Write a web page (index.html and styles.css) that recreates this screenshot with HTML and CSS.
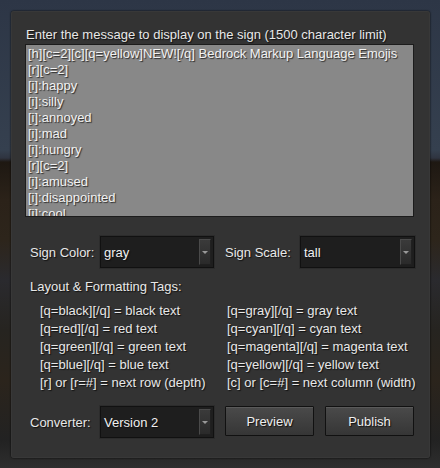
FILE: index.html
```html
<!DOCTYPE html>
<html>
<head>
<meta charset="utf-8">
<link rel="stylesheet" href="styles.css">
</head>
<body>
<div class="scene">
  <div class="panel">
    <div class="title">Enter the message to display on the sign (1500 character limit)</div>
    <div class="editor">
      <div>[h][c=2][c][q=yellow]NEW![/q] Bedrock Markup Language Emojis</div>
      <div>[r][c=2]</div>
      <div>[i]:happy</div>
      <div>[i]:silly</div>
      <div>[i]:annoyed</div>
      <div>[i]:mad</div>
      <div>[i]:hungry</div>
      <div>[r][c=2]</div>
      <div>[i]:amused</div>
      <div>[i]:disappointed</div>
      <div>[i]:cool</div>
    </div>
    <div class="row settings">
      <div class="field">
        <span class="label label-a">Sign Color:</span>
        <div class="select sel-a"><span class="value">gray</span><span class="arrow"></span></div>
      </div>
      <div class="field">
        <span class="label label-b">Sign Scale:</span>
        <div class="select sel-b"><span class="value">tall</span><span class="arrow"></span></div>
      </div>
    </div>
    <div class="subtitle">Layout &amp; Formatting Tags:</div>
    <div class="tags">
      <div>[q=black][/q] = black text</div>
      <div>[q=gray][/q] = gray text</div>
      <div>[q=red][/q] = red text</div>
      <div>[q=cyan][/q] = cyan text</div>
      <div>[q=green][/q] = green text</div>
      <div>[q=magenta][/q] = magenta text</div>
      <div>[q=blue][/q] = blue text</div>
      <div>[q=yellow][/q] = yellow text</div>
      <div>[r] or [r=#] = next row (depth)</div>
      <div>[c] or [c=#] = next column (width)</div>
    </div>
    <div class="row converter">
      <div class="field">
        <span class="label label-a">Converter:</span>
        <div class="select sel-a"><span class="value">Version 2</span><span class="arrow"></span></div>
      </div>
      <div class="buttons">
        <button class="btn">Preview</button>
        <button class="btn">Publish</button>
      </div>
    </div>
  </div>
</div>
</body>
</html>
```
FILE: styles.css
```css
html, body {
  margin: 0;
  padding: 0;
}
body {
  width: 440px;
  height: 468px;
  overflow: hidden;
  font-family: "Liberation Sans", Arial, sans-serif;
  font-size: 13px;
  color: #e8e8e8;
}
.scene {
  width: 440px;
  height: 468px;
  box-sizing: border-box;
  padding: 11px 10px 10px 11px;
  background:
    linear-gradient(to bottom,
      #2d3646 0px, #35404f 150px, #2f3440 158px,
      #1e1812 162px, #2b2219 200px, #2d251b 240px,
      #2a2a2e 280px, #262420 330px, #2b241c 380px,
      #222 440px, #2e2e2e 468px);
}
.panel {
  width: 419px;
  height: 447px;
  box-sizing: border-box;
  background: #333333;
  border-radius: 3px;
  box-shadow: 0 0 2px #000, inset 0 0 0 1px #383838;
  padding: 16px 16px 0 14px;
  text-shadow: 1px 1px 1px #111;
}
.title {
  line-height: 16px;
  padding-left: 1px;
}
.editor {
  margin-top: 1px;
  height: 173px;
  box-sizing: border-box;
  background: #888888;
  border: 1px solid #1c1c1c;
  padding: 1px 2px;
  overflow: hidden;
  line-height: 16px;
  color: #f2f2f2;
  text-shadow: 1px 1px 1px #2a2a2a;
  white-space: nowrap;
}
.row {
  display: flex;
  align-items: center;
  padding-left: 5px;
}
.settings {
  margin-top: 19px;
}
.field {
  display: flex;
  align-items: center;
}
.label-a {
  width: 70px;
}
.label-b {
  width: 75px;
  margin-left: 11px;
}
.select {
  position: relative;
  height: 32px;
  box-sizing: border-box;
  background: #1e1e1e;
  border: 1px solid #111;
  box-shadow: 0 0 0 1px #2c2c2c;
  display: flex;
  align-items: center;
  padding-left: 3px;
  color: #f0f0f0;
}
.sel-a { width: 114px; }
.sel-b { width: 115px; }
.arrow {
  position: absolute;
  right: 2px;
  top: 2px;
  width: 12px;
  height: 26px;
  box-sizing: border-box;
  background: linear-gradient(#3a3a3a, #2a2a2a);
  border: 1px solid #4a4a4a;
  border-right-color: #202020;
  border-bottom-color: #202020;
}
.arrow::after {
  content: "";
  position: absolute;
  left: 2px;
  top: 11px;
  border-left: 3px solid transparent;
  border-right: 3px solid transparent;
  border-top: 3px solid #999;
}
.subtitle {
  margin-top: 11px;
  padding-left: 5px;
  line-height: 16px;
}
.tags {
  margin-top: 7px;
  padding-left: 15px;
  display: grid;
  grid-template-columns: 187px auto;
  line-height: 18px;
  white-space: nowrap;
}
.converter {
  margin-top: 14px;
}
.buttons {
  display: flex;
  gap: 11px;
  margin-left: 11px;
  align-self: flex-start;
}
.btn {
  width: 89px;
  height: 30px;
  margin: 0;
  padding: 0;
  font-family: "Liberation Sans", Arial, sans-serif;
  font-size: 13px;
  color: #eeeeee;
  text-shadow: 1px 1px 1px #111;
  background: linear-gradient(#4a4a4a, #363636);
  border: 1px solid #111;
  box-shadow: inset 0 1px 0 #5a5a5a;
  border-radius: 1px;
}
```
